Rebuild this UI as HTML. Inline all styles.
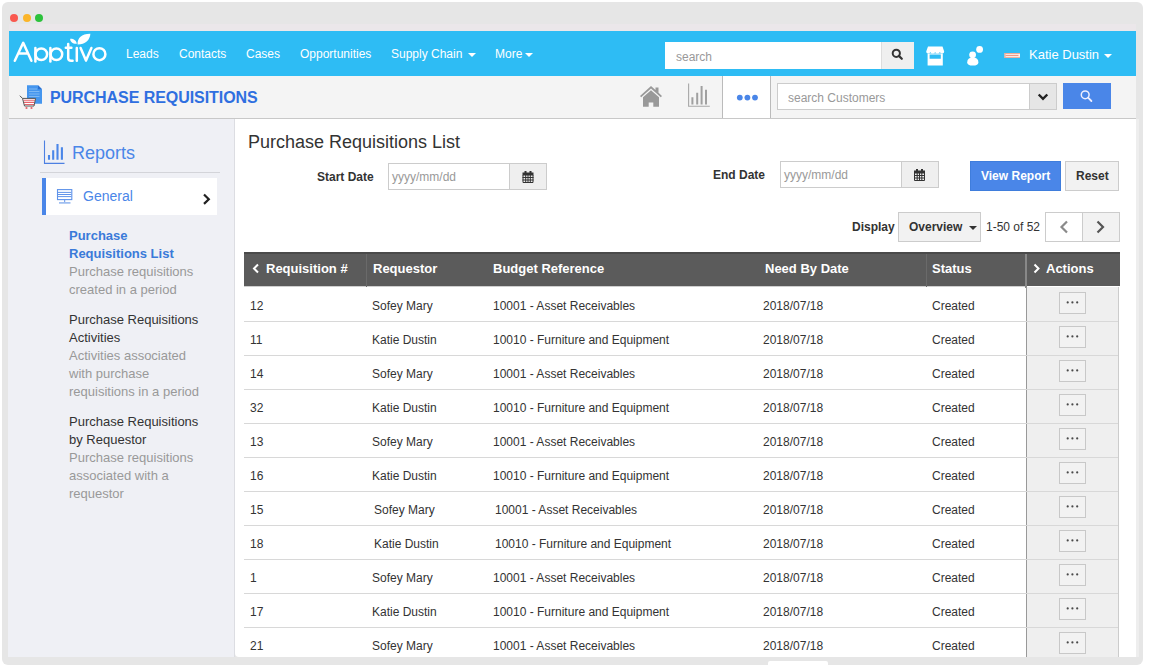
<!DOCTYPE html>
<html><head><meta charset="utf-8">
<style>
*{box-sizing:border-box;margin:0;padding:0}
html,body{width:1150px;height:670px;overflow:hidden;background:#fff;font-family:"Liberation Sans",sans-serif;}
body{position:relative}
.a{position:absolute;white-space:nowrap;line-height:1}
.b{position:absolute}
#frame{position:absolute;left:2px;top:2px;width:1141px;height:663px;background:#e6e6e6;border-radius:6px}
.dot{position:absolute;top:13.5px;width:8px;height:8px;border-radius:50%}
#nav{position:absolute;left:9px;top:31px;width:1127px;height:45px;background:#2ebcf4}
#sub{position:absolute;left:9px;top:76px;width:1127px;height:43px;background:#f4f4f4;border-bottom:1px solid #c8c8c8}
#side{position:absolute;left:8px;top:119px;width:227px;height:538px;background:#eff0f5;border-right:1px solid #dcdde2}
#main{position:absolute;left:235px;top:119px;width:901px;height:538px;background:#fff;border-bottom-left-radius:4px;overflow:hidden}
.nv{color:#fff;font-size:12px}
.caret{position:absolute;width:0;height:0;border-left:4px solid transparent;border-right:4px solid transparent;border-top:4px solid #fff}
svg{position:absolute;overflow:visible}
.lbl{font-size:12px;font-weight:bold;color:#333}
.inp{position:absolute;background:#fff;border:1px solid #ccc}
.btn{position:absolute;background:#efefef;border:1px solid #ccc}
.th{position:absolute;top:134px;color:#fff;font-size:13px;font-weight:bold;line-height:1}
.td{position:absolute;color:#333;font-size:12px;line-height:1}
#mc{position:absolute;left:-235px;top:-119px;width:1150px;height:700px}
.act{left:1026px;width:93px;height:34px;background:#efefef;border-left:1px solid #999;border-right:1px solid #ccc}
.abtn{left:1059px;width:27px;height:22px;background:#f2f2f2;border:1px solid #c8c8c8}
.sd{position:absolute;left:69px;margin-top:1px;font-size:13px;line-height:18px;white-space:nowrap}
</style></head><body>
<div id="frame"></div>
<div class="dot" style="left:10.3px;background:#f9584f"></div>
<div class="dot" style="left:22.7px;background:#fbb52a"></div>
<div class="dot" style="left:35.4px;background:#2cc23c"></div>

<div class="b" style="left:9px;top:24px;width:1127px;height:7px;background:#ebe7ea"></div>
<div id="nav"></div>
<!-- logo -->
<svg style="left:0;top:0" width="1150" height="80" viewBox="0 0 1150 80">
 <g fill="none" stroke="#fff" stroke-width="2.5" stroke-linecap="round" stroke-linejoin="round">
  <path d="M14.8 60.8 L23.2 42.8 L31.4 60.8 M18.8 53.6 H27.6"/>
  <path d="M35.4 48 V61.6"/><circle cx="41.3" cy="54.3" r="5.8"/>
  <path d="M50.4 48 V61.6"/><circle cx="56.4" cy="54.3" r="5.8"/>
  <path d="M68.2 44 V58 Q68.2 60.8 71.2 60.8 H72.6 M65.8 47.8 H71.4"/>
  <path d="M76.8 48 V60.8"/>
  <path d="M80.6 48 L86 60.6 L91.4 48"/>
  <circle cx="99.4" cy="54.2" r="6"/>
 </g>
 <path fill="#fff" d="M77.6 44.5 C77 38 82 33.5 90.4 33.7 C90 40 85 44.6 77.6 44.5 Z"/>
 <path fill="#fff" d="M76.8 43.8 C72.5 44 70 41.5 70.2 38.7 C73.5 38.5 76.5 40.5 76.8 43.8 Z"/>
</svg>

<div class="a nv" style="left:126px;top:48px">Leads</div>
<div class="a nv" style="left:179px;top:48px">Contacts</div>
<div class="a nv" style="left:246px;top:48px">Cases</div>
<div class="a nv" style="left:300px;top:48px">Opportunities</div>
<div class="a nv" style="left:391px;top:48px">Supply Chain</div>
<div class="caret" style="left:468px;top:53px"></div>
<div class="a nv" style="left:495px;top:48px">More</div>
<div class="caret" style="left:525px;top:53px"></div>

<!-- top search -->
<div class="b" style="left:665px;top:42px;width:216px;height:27px;background:#fff"></div>
<div class="a" style="left:676px;top:51px;font-size:12px;color:#999">search</div>
<div class="b" style="left:881px;top:42px;width:33px;height:27px;background:#efefef;border-left:1px solid #ddd"></div>
<svg style="left:0;top:0" width="1150" height="80" viewBox="0 0 1150 80">
 <circle cx="896.3" cy="53.3" r="3.6" fill="none" stroke="#333" stroke-width="2"/>
 <path d="M898.9 55.9 L901.8 58.8" stroke="#333" stroke-width="2.2" stroke-linecap="round"/>
 <!-- store -->
 <path fill="#fff" d="M928 46.6 H942.5 L944.2 51.5 Q944.2 53.6 942.3 53.6 Q940.4 53.6 939.9 52 Q939.2 53.6 937.3 53.6 Q935.4 53.6 935.2 52 Q934.6 53.6 932.6 53.6 Q930.7 53.6 930.3 52 Q929.8 53.6 928 53.6 Q926.2 53.6 926.2 51.5 Z"/>
 <path fill="#fff" d="M927.6 53.4 H942.8 V65.4 H927.6 Z M929.6 54.4 V58.8 H940.8 V54.4 Z" fill-rule="evenodd"/>
 <!-- person -->
 <circle cx="972.6" cy="54.8" r="3.4" fill="#fff"/>
 <path fill="#fff" d="M967.2 62.5 Q967.2 57.6 972.8 57.6 Q978.4 57.6 978.4 62.5 Q978.4 65.6 972.8 65.6 Q967.2 65.6 967.2 62.5 Z"/>
 <circle cx="979.6" cy="49.4" r="3.4" fill="#fff"/>
 <!-- flag -->
 <rect x="1004.5" y="53" width="15.5" height="4.8" fill="#faf2ee"/>
 <rect x="1004.5" y="53" width="15.5" height="0.9" fill="#f0a48e"/>
 <rect x="1004.5" y="56.9" width="15.5" height="0.9" fill="#f0a48e"/>
 <rect x="1005.5" y="54.9" width="13" height="0.9" fill="#e9836e"/>
 <rect x="1004.5" y="53" width="1" height="4.8" fill="#f0a48e"/>
</svg>
<div class="a" style="left:1029px;top:48px;font-size:13px;color:#fff">Katie Dustin</div>
<div class="caret" style="left:1104px;top:54px"></div>

<div id="sub"></div>
<!-- subheader icon -->
<svg style="left:0;top:0" width="1150" height="120" viewBox="0 0 1150 120">
 <path fill="#4596ee" d="M27 85.2 H38 L42 89.2 V103.8 H27 Z"/>
 <path fill="#2a6fd0" d="M38 85.2 V89.2 H42 Z"/>
 <path stroke="#8cc0f4" stroke-width="0.8" d="M29 89 H37 M29 91.5 H39.5 M29 94 H39.5 M29 96.5 H39.5"/>
 <path fill="#fff" d="M22.5 98.4 L24.5 106 H34 L35.6 98.4 Z"/>
 <path stroke="#e5636b" stroke-width="1.1" d="M23.5 100.2 H34.8 M24 102.4 H34.4 M24.4 104.5 H34"/>
 <path fill="none" stroke="#555" stroke-width="1" d="M19.8 95.7 L22.5 98.4 L24.5 106 H34 L35.6 98.4 H22.5"/>
 <circle cx="26.5" cy="108" r="1.1" fill="#e5636b"/><circle cx="31.5" cy="108" r="1.1" fill="#e5636b"/>
</svg>
<div class="a" style="left:50px;top:90px;font-size:16px;font-weight:bold;color:#2f6fe0;letter-spacing:-0.06px">PURCHASE REQUISITIONS</div>

<!-- home / chart icons -->
<svg style="left:0;top:0" width="1150" height="120" viewBox="0 0 1150 120">
 <path fill="#999" d="M640 96 L651 86 L655.5 90 V87.5 H658.5 V92.8 L662 96 L660.8 97.3 L651 88.5 L641.2 97.3 Z"/>
 <path fill="#999" d="M643 97.3 L651 90.2 L659 97.3 V106.8 H653.3 V102.5 H648.7 V106.8 H643 Z"/>
 <path fill="none" stroke="#a8a8a8" stroke-width="1.1" d="M688.6 83.5 V106.2 H709.8"/>
 <path stroke="#a0a0a0" stroke-width="2" d="M692.4 104.5 V97.2 M697.2 104.5 V92.7 M701.6 104.5 V86 M706 104.5 V89.8"/>
</svg>
<div class="b" style="left:722px;top:76px;width:49px;height:42px;background:#fff;border-left:1px solid #bbb;border-right:1px solid #bbb"></div>
<svg style="left:0;top:0" width="1150" height="120" viewBox="0 0 1150 120">
 <circle cx="739.8" cy="97.6" r="2.9" fill="#4a86e8"/>
 <circle cx="747.4" cy="97.6" r="2.9" fill="#4a86e8"/>
 <circle cx="755" cy="97.6" r="2.9" fill="#4a86e8"/>
</svg>
<!-- search customers -->
<div class="inp" style="left:777px;top:83px;width:253px;height:27px"></div>
<div class="a" style="left:788px;top:92px;font-size:12px;color:#999">search Customers</div>
<div class="btn" style="left:1029px;top:83px;width:28px;height:27px;background:#e6e6e6"></div>
<svg style="left:0;top:0" width="1150" height="120" viewBox="0 0 1150 120">
 <path fill="none" stroke="#222" stroke-width="2.4" d="M1038.7 94.5 L1043 98.8 L1047.3 94.5"/>
</svg>
<div class="b" style="left:1063px;top:83px;width:48px;height:26px;background:#4a86e8"></div>
<svg style="left:0;top:0" width="1150" height="120" viewBox="0 0 1150 120">
 <circle cx="1085.2" cy="94.8" r="3.9" fill="none" stroke="#eef" stroke-width="1.5"/>
 <path d="M1088.1 97.7 L1091.4 101" stroke="#eef" stroke-width="1.8" stroke-linecap="round"/>
</svg>

<div class="b" style="left:1136px;top:119px;width:3px;height:538px;background:#eeeeee"></div>
<div class="b" style="left:768px;top:661px;width:60px;height:6px;background:#fff;border-radius:2px 2px 0 0"></div>
<div id="side"></div>
<!-- reports icon -->
<svg style="left:0;top:0" width="240" height="660" viewBox="0 0 240 660">
 <path fill="none" stroke="#4d80e2" stroke-width="1.1" d="M44.5 140.5 V163.4 H64.5"/>
 <path stroke="#4a86e8" stroke-width="2.1" d="M49 159.8 V155.1 M53.2 159.8 V150.3 M57.5 159.8 V144.1 M61.9 159.8 V147.2"/>
</svg>
<div class="a" style="left:72px;top:144px;font-size:18px;color:#4a86e8">Reports</div>
<div class="b" style="left:40px;top:172px;width:180px;height:1px;background:#d3d4d9"></div>
<div class="b" style="left:42px;top:178px;width:175px;height:37px;background:#fff;border-left:4px solid #4a86e8"></div>
<svg style="left:0;top:0" width="240" height="660" viewBox="0 0 240 660">
 <rect x="57.5" y="189.6" width="14.3" height="10" fill="none" stroke="#5f93ea" stroke-width="1.1"/>
 <path stroke="#5f93ea" stroke-width="1" d="M58 192.4 H71.3 M58 194.5 H71.3 M58 196.6 H71.3 M64.7 199.8 V202.2"/>
 <path stroke="#8fb3ee" stroke-width="1.5" d="M59 202.9 H70.5"/>
 <path fill="none" stroke="#222" stroke-width="2.2" d="M204 194.5 L208.8 199.2 L204 203.9"/>
</svg>
<div class="a" style="left:83px;top:189px;font-size:14px;color:#4a86e8">General</div>

<div class="sd" style="top:226px;color:#3a7ad9;font-weight:bold">Purchase<br>Requisitions List</div>
<div class="sd" style="top:262px;color:#999">Purchase requisitions<br>created in a period</div>
<div class="sd" style="top:310px;color:#333">Purchase Requisitions<br>Activities</div>
<div class="sd" style="top:346px;color:#999">Activities associated<br>with purchase<br>requisitions in a period</div>
<div class="sd" style="top:412px;color:#333">Purchase Requisitions<br>by Requestor</div>
<div class="sd" style="top:448px;color:#999">Purchase requisitions<br>associated with a<br>requestor</div>

<div id="main">
<div id="mc">
<div class="a" style="left:248px;top:133px;font-size:18px;color:#333">Purchase Requisitions List</div>
<div class="a lbl" style="left:317px;top:171px">Start Date</div>
<div class="inp" style="left:388px;top:163px;width:122px;height:27px"></div>
<div class="a" style="left:392px;top:171px;font-size:12px;color:#999">yyyy/mm/dd</div>
<div class="btn" style="left:509px;top:163px;width:38px;height:27px"></div>
<div class="a lbl" style="left:713px;top:169px">End Date</div>
<div class="inp" style="left:780px;top:161px;width:122px;height:27px"></div>
<div class="a" style="left:784px;top:169px;font-size:12px;color:#999">yyyy/mm/dd</div>
<div class="btn" style="left:901px;top:161px;width:38px;height:27px"></div>
<svg style="left:0;top:0" width="1150" height="300" viewBox="0 0 1150 300">
 <g fill="#333">
<rect x="522.5" y="172.5" width="11" height="3" /><rect x="524.5" y="171" width="2" height="2.5"/><rect x="529.5" y="171" width="2" height="2.5"/><path fill="none" stroke="#333" stroke-width="1" d="M523.0 175 V182.5 H533.0 V175 M525.7 175 V182.5 M528.0 175 V182.5 M530.3 175 V182.5 M522.5 177.5 H533.5 M522.5 180 H533.5"/>
<rect x="914" y="170.5" width="11" height="3" /><rect x="916" y="169" width="2" height="2.5"/><rect x="921" y="169" width="2" height="2.5"/><path fill="none" stroke="#333" stroke-width="1" d="M914.5 173 V180.5 H924.5 V173 M917.2 173 V180.5 M919.5 173 V180.5 M921.8 173 V180.5 M914 175.5 H925 M914 178 H925"/>
 </g>
</svg>
<div class="b" style="left:970px;top:161px;width:91px;height:30px;background:#4a86e8;border:1px solid #3f7ddc"></div>
<div class="a" style="left:981px;top:170px;font-size:12px;font-weight:bold;color:#fff">View Report</div>
<div class="btn" style="left:1065px;top:161px;width:54px;height:30px;background:#f2f2f2"></div>
<div class="a lbl" style="left:1076px;top:170px">Reset</div>

<div class="a lbl" style="left:852px;top:221px">Display</div>
<div class="btn" style="left:898px;top:212px;width:83px;height:30px;background:#f2f2f2"></div>
<div class="a lbl" style="left:909px;top:221px">Overview</div>
<div class="caret" style="left:969px;top:226px;border-top-color:#333"></div>
<div class="a" style="left:986px;top:221px;font-size:12px;color:#333">1-50 of 52</div>
<div class="b" style="left:1045px;top:212px;width:38px;height:30px;background:#fff;border:1px solid #ccc"></div>
<div class="btn" style="left:1082px;top:212px;width:38px;height:30px;background:#f2f2f2"></div>
<svg style="left:0;top:0" width="1150" height="300" viewBox="0 0 1150 300">
 <path fill="none" stroke="#8a8a8a" stroke-width="2.2" d="M1067 221.5 L1061.5 227 L1067 232.5"/>
 <path fill="none" stroke="#555" stroke-width="2.2" d="M1097.5 221.5 L1103 227 L1097.5 232.5"/>
</svg>

<div class="b" style="left:244px;top:252px;width:876px;height:34px;background:#5b5b5b;border-top:2px solid #4a4a4a"></div>
<div class="b" style="left:244px;top:286px;width:782px;height:1px;background:#cfcfcf"></div>
<div class="b" style="left:366px;top:254px;width:1px;height:33px;background:#6a6a6a"></div>
<div class="b" style="left:926px;top:254px;width:1px;height:33px;background:#6a6a6a"></div>
<div class="b" style="left:1025px;top:254px;width:2px;height:34px;background:#888"></div>
<svg style="left:0;top:0" width="1150" height="300" viewBox="0 0 1150 300">
 <path fill="none" stroke="#fff" stroke-width="2" d="M258 264.5 L254 268.5 L258 272.5"/>
 <path fill="none" stroke="#fff" stroke-width="2" d="M1034.5 264.5 L1038.5 268.5 L1034.5 272.5"/>
</svg>
<div class="th" style="left:266px;top:262px">Requisition #</div>
<div class="th" style="left:373px;top:262px">Requestor</div>
<div class="th" style="left:493px;top:262px">Budget Reference</div>
<div class="th" style="left:765px;top:262px">Need By Date</div>
<div class="th" style="left:932px;top:262px">Status</div>
<div class="th" style="left:1046px;top:262px">Actions</div>
<div class="b act" style="top:287px"></div>
<div class="b act" style="top:321px"></div>
<div class="b act" style="top:355px"></div>
<div class="b act" style="top:389px"></div>
<div class="b act" style="top:423px"></div>
<div class="b act" style="top:457px"></div>
<div class="b act" style="top:491px"></div>
<div class="b act" style="top:525px"></div>
<div class="b act" style="top:559px"></div>
<div class="b act" style="top:593px"></div>
<div class="b act" style="top:627px"></div>
<div class="b" style="left:244px;top:321px;width:874px;height:1px;background:#d8d8d8"></div>
<div class="b abtn" style="top:292px"></div>
<div class="td" style="left:250px;top:300px">12</div>
<div class="td" style="left:372px;top:300px">Sofey Mary</div>
<div class="td" style="left:493px;top:300px">10001 - Asset Receivables</div>
<div class="td" style="left:763px;top:300px">2018/07/18</div>
<div class="td" style="left:932px;top:300px">Created</div>
<div class="b" style="left:244px;top:355px;width:874px;height:1px;background:#d8d8d8"></div>
<div class="b abtn" style="top:326px"></div>
<div class="td" style="left:250px;top:334px">11</div>
<div class="td" style="left:372px;top:334px">Katie Dustin</div>
<div class="td" style="left:493px;top:334px">10010 - Furniture and Equipment</div>
<div class="td" style="left:763px;top:334px">2018/07/18</div>
<div class="td" style="left:932px;top:334px">Created</div>
<div class="b" style="left:244px;top:389px;width:874px;height:1px;background:#d8d8d8"></div>
<div class="b abtn" style="top:360px"></div>
<div class="td" style="left:250px;top:368px">14</div>
<div class="td" style="left:372px;top:368px">Sofey Mary</div>
<div class="td" style="left:493px;top:368px">10001 - Asset Receivables</div>
<div class="td" style="left:763px;top:368px">2018/07/18</div>
<div class="td" style="left:932px;top:368px">Created</div>
<div class="b" style="left:244px;top:423px;width:874px;height:1px;background:#d8d8d8"></div>
<div class="b abtn" style="top:394px"></div>
<div class="td" style="left:250px;top:402px">32</div>
<div class="td" style="left:372px;top:402px">Katie Dustin</div>
<div class="td" style="left:493px;top:402px">10010 - Furniture and Equipment</div>
<div class="td" style="left:763px;top:402px">2018/07/18</div>
<div class="td" style="left:932px;top:402px">Created</div>
<div class="b" style="left:244px;top:457px;width:874px;height:1px;background:#d8d8d8"></div>
<div class="b abtn" style="top:428px"></div>
<div class="td" style="left:250px;top:436px">13</div>
<div class="td" style="left:372px;top:436px">Sofey Mary</div>
<div class="td" style="left:493px;top:436px">10001 - Asset Receivables</div>
<div class="td" style="left:763px;top:436px">2018/07/18</div>
<div class="td" style="left:932px;top:436px">Created</div>
<div class="b" style="left:244px;top:491px;width:874px;height:1px;background:#d8d8d8"></div>
<div class="b abtn" style="top:462px"></div>
<div class="td" style="left:250px;top:470px">16</div>
<div class="td" style="left:372px;top:470px">Katie Dustin</div>
<div class="td" style="left:493px;top:470px">10010 - Furniture and Equipment</div>
<div class="td" style="left:763px;top:470px">2018/07/18</div>
<div class="td" style="left:932px;top:470px">Created</div>
<div class="b" style="left:244px;top:525px;width:874px;height:1px;background:#d8d8d8"></div>
<div class="b abtn" style="top:496px"></div>
<div class="td" style="left:250px;top:504px">15</div>
<div class="td" style="left:374px;top:504px">Sofey Mary</div>
<div class="td" style="left:495px;top:504px">10001 - Asset Receivables</div>
<div class="td" style="left:763px;top:504px">2018/07/18</div>
<div class="td" style="left:932px;top:504px">Created</div>
<div class="b" style="left:244px;top:559px;width:874px;height:1px;background:#d8d8d8"></div>
<div class="b abtn" style="top:530px"></div>
<div class="td" style="left:250px;top:538px">18</div>
<div class="td" style="left:374px;top:538px">Katie Dustin</div>
<div class="td" style="left:495px;top:538px">10010 - Furniture and Equipment</div>
<div class="td" style="left:763px;top:538px">2018/07/18</div>
<div class="td" style="left:932px;top:538px">Created</div>
<div class="b" style="left:244px;top:593px;width:874px;height:1px;background:#d8d8d8"></div>
<div class="b abtn" style="top:564px"></div>
<div class="td" style="left:250px;top:572px">1</div>
<div class="td" style="left:372px;top:572px">Sofey Mary</div>
<div class="td" style="left:493px;top:572px">10001 - Asset Receivables</div>
<div class="td" style="left:763px;top:572px">2018/07/18</div>
<div class="td" style="left:932px;top:572px">Created</div>
<div class="b" style="left:244px;top:627px;width:874px;height:1px;background:#d8d8d8"></div>
<div class="b abtn" style="top:598px"></div>
<div class="td" style="left:250px;top:606px">17</div>
<div class="td" style="left:372px;top:606px">Katie Dustin</div>
<div class="td" style="left:493px;top:606px">10010 - Furniture and Equipment</div>
<div class="td" style="left:763px;top:606px">2018/07/18</div>
<div class="td" style="left:932px;top:606px">Created</div>
<div class="b" style="left:244px;top:661px;width:874px;height:1px;background:#d8d8d8"></div>
<div class="b abtn" style="top:632px"></div>
<div class="td" style="left:250px;top:640px">21</div>
<div class="td" style="left:372px;top:640px">Sofey Mary</div>
<div class="td" style="left:493px;top:640px">10001 - Asset Receivables</div>
<div class="td" style="left:763px;top:640px">2018/07/18</div>
<div class="td" style="left:932px;top:640px">Created</div>
<svg style="left:0;top:0" width="1150" height="700" viewBox="0 0 1150 700"><g fill="#4a4a4a"><circle cx="1067.7" cy="302.4" r="1.1"/><circle cx="1072.4" cy="302.4" r="1.1"/><circle cx="1077.2" cy="302.4" r="1.1"/><circle cx="1067.7" cy="336.4" r="1.1"/><circle cx="1072.4" cy="336.4" r="1.1"/><circle cx="1077.2" cy="336.4" r="1.1"/><circle cx="1067.7" cy="370.4" r="1.1"/><circle cx="1072.4" cy="370.4" r="1.1"/><circle cx="1077.2" cy="370.4" r="1.1"/><circle cx="1067.7" cy="404.4" r="1.1"/><circle cx="1072.4" cy="404.4" r="1.1"/><circle cx="1077.2" cy="404.4" r="1.1"/><circle cx="1067.7" cy="438.4" r="1.1"/><circle cx="1072.4" cy="438.4" r="1.1"/><circle cx="1077.2" cy="438.4" r="1.1"/><circle cx="1067.7" cy="472.4" r="1.1"/><circle cx="1072.4" cy="472.4" r="1.1"/><circle cx="1077.2" cy="472.4" r="1.1"/><circle cx="1067.7" cy="506.4" r="1.1"/><circle cx="1072.4" cy="506.4" r="1.1"/><circle cx="1077.2" cy="506.4" r="1.1"/><circle cx="1067.7" cy="540.4" r="1.1"/><circle cx="1072.4" cy="540.4" r="1.1"/><circle cx="1077.2" cy="540.4" r="1.1"/><circle cx="1067.7" cy="574.4" r="1.1"/><circle cx="1072.4" cy="574.4" r="1.1"/><circle cx="1077.2" cy="574.4" r="1.1"/><circle cx="1067.7" cy="608.4" r="1.1"/><circle cx="1072.4" cy="608.4" r="1.1"/><circle cx="1077.2" cy="608.4" r="1.1"/><circle cx="1067.7" cy="642.4" r="1.1"/><circle cx="1072.4" cy="642.4" r="1.1"/><circle cx="1077.2" cy="642.4" r="1.1"/></g></svg>
</div>
</div>

</body></html>
